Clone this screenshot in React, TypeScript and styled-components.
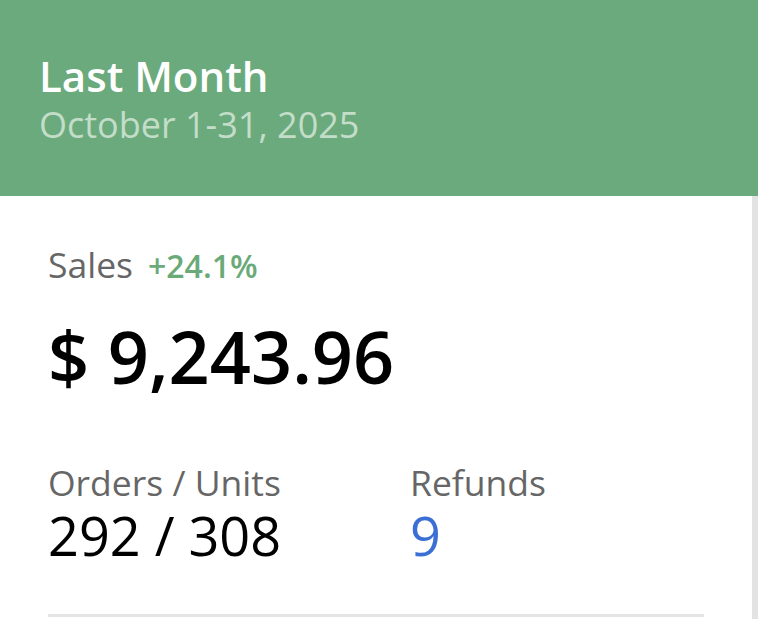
import React from "react";
import styled, { createGlobalStyle } from "styled-components";

const GlobalStyle = createGlobalStyle`
  html, body {
    margin: 0;
    padding: 0;
    background: #ffffff;
  }
  body {
    font-family: "Open Sans", "Noto Sans", sans-serif;
  }
`;

type StatProps = {
  label: string;
  value: string;
  tone?: "default" | "link";
};

export default function App(): JSX.Element {
  return (
    <>
      <GlobalStyle />
      <Card>
        <Header>
          <Title>Last Month</Title>
          <Period>October 1-31, 2025</Period>
        </Header>
        <Body>
          <SalesRow>
            <Label>Sales</Label>
            <Change>+24.1%</Change>
          </SalesRow>
          <Amount>$ 9,243.96</Amount>
          <StatsRow>
            <Stat label="Orders / Units" value="292 / 308" />
            <Stat label="Refunds" value="9" tone="link" />
          </StatsRow>
          <Divider />
        </Body>
      </Card>
    </>
  );
}

const Stat = ({ label, value, tone = "default" }: StatProps): JSX.Element => {
  return (
    <StatBox>
      <Label>{label}</Label>
      <StatValue $tone={tone}>{value}</StatValue>
    </StatBox>
  );
};

const Card = styled.div`
  width: 758px;
  display: flex;
  flex-direction: column;
`;

const Header = styled.header`
  height: 196px;
  box-sizing: border-box;
  padding: 52px 0 0 39px;
  background-color: #6baa7c;
  display: flex;
  flex-direction: column;
`;

const Title = styled.h1`
  margin: 0;
  font-size: 42px;
  line-height: 48px;
  font-weight: 600;
  color: #ffffff;
`;

const Period = styled.div`
  font-size: 36px;
  line-height: 50px;
  font-weight: 400;
  color: #c3ddc9;
`;

const Body = styled.section`
  display: flex;
  flex-direction: column;
  padding: 46px 48px 0 48px;
  border-right: 6px solid #e3e3e3;
  height: 423px;
  box-sizing: border-box;
`;

const SalesRow = styled.div`
  display: flex;
  align-items: baseline;
  gap: 15px;
  height: 44px;
`;

const Label = styled.span`
  font-size: 35.5px;
  line-height: 44px;
  color: #666666;
`;

const Change = styled.span`
  font-size: 32px;
  font-weight: 600;
  color: #6aaa78;
`;

const Amount = styled.div`
  margin-top: 30px;
  font-size: 72px;
  line-height: 80px;
  font-weight: 600;
  color: #000000;
`;

const StatsRow = styled.div`
  margin-top: 64px;
  display: grid;
  grid-template-columns: 362px 1fr;
`;

const StatBox = styled.div`
  display: flex;
  flex-direction: column;
`;

const StatValue = styled.span<{ $tone: "default" | "link" }>`
  font-size: 54px;
  line-height: 62px;
  font-weight: 400;
  color: ${({ $tone }) => ($tone === "link" ? "#3b6fd6" : "#000000")};
`;

const Divider = styled.hr`
  margin: 48px 0 0 0;
  width: 656px;
  height: 3px;
  border: none;
  background-color: #e5e5e5;
`;
